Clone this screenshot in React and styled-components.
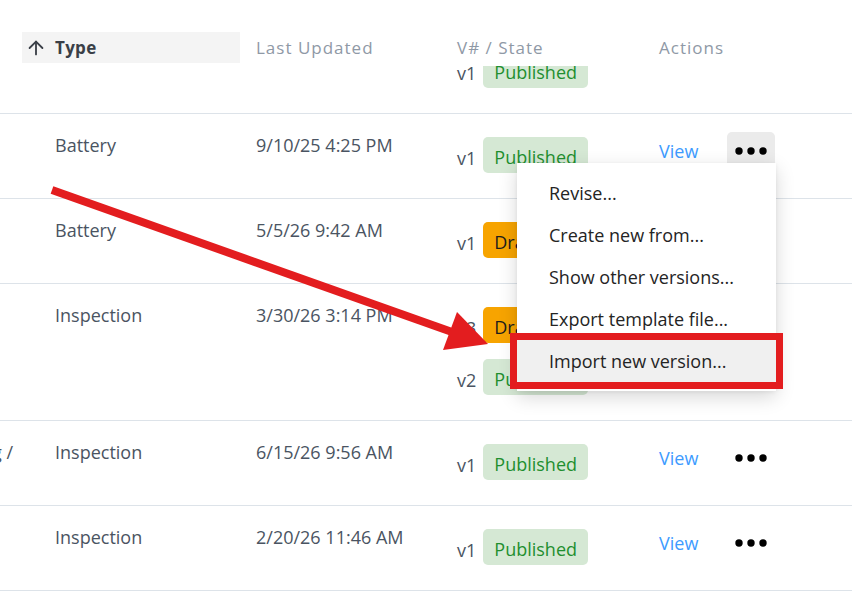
import React from 'react';
import styled, { createGlobalStyle } from 'styled-components';
import { ArrowUp } from 'lucide-react';

const GlobalStyle = createGlobalStyle`
    html, body {
        margin: 0;
        padding: 0;
        background: #ffffff;
    }
    body {
        width: 852px;
        height: 606px;
        overflow: hidden;
        font-family: "Open Sans", "Noto Sans", sans-serif;
        font-size: 18px;
        color: #4a5462;
    }
`

const columns = '22px 218px 201px 202px 1fr';

const Page = styled.div`
    position: relative;
    width: 852px;
    height: 606px;
    overflow: hidden;
`

const HeaderRow = styled.div`
    display: grid;
    grid-template-columns: ${columns};
    height: 66px;
    padding-top: 32px;
    box-sizing: border-box;
    align-items: start;
`

const HeaderCell = styled.div`
    height: 31px;
    display: flex;
    align-items: center;
    padding-left: ${({$indent}) => $indent || 16}px;
    color: #8f99a6;
    font-size: 17px;
    letter-spacing: 1px;
    background: ${({$sorted}) => $sorted ? '#f4f4f4' : 'transparent'};
`

const SortLabel = styled.span`
    font-weight: 700;
    color: #3a3f47;
    letter-spacing: 0.3px;
    margin-left: 8px;
`

const Row = styled.div`
    display: grid;
    grid-template-columns: ${columns};
    grid-template-rows: ${({$height}) => $height ? `${$height}px` : 'auto'};
    align-items: start;
    border-bottom: 1px solid #dde3e9;
    overflow: ${({$clipped}) => $clipped ? 'hidden' : 'visible'};
`

const LeadCell = styled.div`
    display: flex;
    justify-content: flex-end;
    overflow: hidden;
    white-space: nowrap;
    padding: 19px 9px 0 0;
    line-height: 24px;
`

const TextCell = styled.div`
    padding: 19px 0 0 ${({$indent}) => $indent || 16}px;
    line-height: 24px;
    white-space: nowrap;
`

const StateCell = styled.div`
    grid-column: 4;
    align-self: ${({$end}) => $end ? 'end' : 'start'};
    display: flex;
    flex-direction: column;
    gap: 16px;
    padding: 23px 0 25px 16px;
`

const VersionLine = styled.div`
    display: flex;
    align-items: center;
    gap: 7px;
`

const VersionNo = styled.span`
    padding-top: 6px;
    line-height: 24px;
`

const Badge = styled.span`
    height: 36px;
    display: inline-flex;
    align-items: center;
    padding: 3px 11px 0;
    border-radius: 5px;
    line-height: 1;
    box-sizing: border-box;
    background: ${({$state}) => $state === 'Draft' ? '#f7a400' : '#d5e8d4'};
    color: ${({$state}) => $state === 'Draft' ? '#1c1c1c' : '#1f8f2f'};
`

const ActionsCell = styled.div`
    display: grid;
    grid-template-columns: 68px 48px;
    align-items: center;
    padding: 18px 0 0 16px;
`

const ViewLink = styled.a`
    color: #3d9bff;
    text-decoration: none;
    cursor: pointer;
`

const MenuAnchor = styled.div`
    position: relative;
`

const DotsButton = styled.button`
    width: 48px;
    height: 38px;
    border: none;
    border-radius: 5px;
    background: ${({$active}) => $active ? '#ebebeb' : 'transparent'};
    display: flex;
    align-items: center;
    justify-content: center;
    padding: 0;
    cursor: pointer;
`

const Menu = styled.div`
    position: absolute;
    top: 31px;
    right: -1px;
    width: 259px;
    padding: 9px 0;
    background: #ffffff;
    box-shadow: 0 6px 18px rgba(0, 0, 0, 0.16), 0 1px 4px rgba(0, 0, 0, 0.06);
    z-index: 10;
`

const MenuItem = styled.div`
    height: 42px;
    display: flex;
    align-items: center;
    padding-left: 32px;
    color: #242424;
    white-space: nowrap;
    background: ${({$hover}) => $hover ? '#f0f0f0' : 'transparent'};
    outline: ${({$hover}) => $hover ? '7px solid #e31d1f' : 'none'};
`

const Annotation = styled.svg`
    position: absolute;
    top: 0;
    left: 0;
    pointer-events: none;
    z-index: 20;
`

const Dots = () => (
    <svg width="34" height="10" viewBox="0 0 34 10">
        <circle cx="5" cy="5" r="3.7" fill="#000" />
        <circle cx="17" cy="5" r="3.7" fill="#000" />
        <circle cx="29" cy="5" r="3.7" fill="#000" />
    </svg>
)

const menuItems = ['Revise...', 'Create new from...', 'Show other versions...', 'Export template file...', 'Import new version...'];

const rows = [
    { lead: '', type: 'Battery', updated: '9/10/25 4:25 PM', versions: [['v1', 'Published']], menu: true },
    { lead: '', type: 'Battery', updated: '5/5/26 9:42 AM', versions: [['v1', 'Draft']] },
    { lead: '', type: 'Inspection', updated: '3/30/26 3:14 PM', versions: [['v3', 'Draft'], ['v2', 'Published']] },
    { lead: 'Cleaning /', type: 'Inspection', updated: '6/15/26 9:56 AM', versions: [['v1', 'Published']] },
    { lead: '', type: 'Inspection', updated: '2/20/26 11:46 AM', versions: [['v1', 'Published']] },
];

function Versions({ versions, end }) {
    return <StateCell $end={end}>
        {versions.map(([no, state]) => (
            <VersionLine key={no}>
                <VersionNo>{no}</VersionNo>
                <Badge $state={state}>{state}</Badge>
            </VersionLine>
        ))}
    </StateCell>
}

export default function App() {
    return <Page>
        <GlobalStyle />
        <HeaderRow>
            <div />
            <HeaderCell $sorted $indent={3}>
                <ArrowUp size={22} strokeWidth={2} color="#3a3f47" />
                <SortLabel>Type</SortLabel>
            </HeaderCell>
            <HeaderCell>Last Updated</HeaderCell>
            <HeaderCell>V# / State</HeaderCell>
            <HeaderCell>Actions</HeaderCell>
        </HeaderRow>

        {/* previous row, scrolled mostly under the header */}
        <Row $height={47} $clipped>
            <Versions versions={[['v1', 'Published']]} end />
        </Row>

        {rows.map((r, i) => (
            <Row key={i}>
                <LeadCell>{r.lead}</LeadCell>
                <TextCell $indent={33}>{r.type}</TextCell>
                <TextCell>{r.updated}</TextCell>
                <Versions versions={r.versions} />
                <ActionsCell>
                    <ViewLink>View</ViewLink>
                    <MenuAnchor>
                        <DotsButton $active={r.menu}><Dots /></DotsButton>
                        {r.menu && <Menu>
                            {menuItems.map((m, j) => (
                                <MenuItem key={m} $hover={j === menuItems.length - 1}>{m}</MenuItem>
                            ))}
                        </Menu>}
                    </MenuAnchor>
                </ActionsCell>
            </Row>
        ))}

        <Annotation width="852" height="606" viewBox="0 0 852 606">
            <line x1="52" y1="190" x2="452" y2="332" stroke="#e31d1f" strokeWidth="8" />
            <polygon points="488,344 443,350 457,312" fill="#e31d1f" />
        </Annotation>
    </Page>
}
